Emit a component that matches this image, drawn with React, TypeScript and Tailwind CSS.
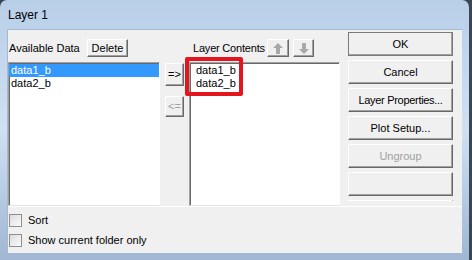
import React from 'react'

const font = { fontFamily: '"Liberation Sans", Arial, sans-serif' }

function Btn({ children, disabled, className = '' }: { children?: React.ReactNode; disabled?: boolean; className?: string }) {
    return (
        <div
            className={`flex items-center justify-center whitespace-nowrap bg-[#f0f0f0] border border-t-white border-l-white border-r-[#696969] border-b-[#696969] shadow-[inset_-1px_-1px_0_#a0a0a0] text-[11px] leading-none ${disabled ? 'text-[#a0a0a0]' : 'text-black'} ${className}`}
        >
            {children}
        </div>
    )
}

function ListBox({ children, className = '' }: { children?: React.ReactNode; className?: string }) {
    return (
        <div className={`bg-white border border-t-[#a0a0a0] border-l-[#a0a0a0] border-r-white border-b-[#e3e3e3] shadow-[inset_1px_1px_0_#696969] pt-px text-[11px] leading-[13px] ${className}`}>
            {children}
        </div>
    )
}

function Check({ label }: { label: string }) {
    return (
        <div className="flex items-center h-[13px] pl-px">
            <div className="w-[13px] h-[13px] border border-[#8f8f8f] bg-gradient-to-br from-[#dcdcdc] to-[#fbfbfb]" />
            <span className="ml-[6px] text-[11px] text-black whitespace-nowrap">{label}</span>
        </div>
    )
}

export default function App() {
    return (
        <div className="w-[472px] h-[260px] bg-[#3b4653] overflow-hidden" style={font}>
            <div className="w-[469px] h-[260px] rounded-t-[7px] bg-gradient-to-b from-[#b8cfe8] via-[#cfe0f2] to-[#9fb7d2] flex flex-col">
                {/* title bar */}
                <div className="h-[29px] pl-[8px] pt-[8px] text-[12px] leading-[14px] text-black">Layer 1</div>

                {/* client area */}
                <div className="relative ml-[7px] w-[455px] h-[224px] bg-[#f0f0f0] border-l border-t border-[#a6b9cf] flex flex-col">
                    <div className="flex h-[176px]">
                        {/* available data */}
                        <div className="w-[152px] flex flex-col">
                            <div className="flex items-center h-[18px] mt-[9px] mb-[5px]">
                                <span className="w-[79px] pl-px text-[11px] whitespace-nowrap">Available Data</span>
                                <Btn className="w-[41px] h-[18px]">Delete</Btn>
                            </div>
                            <ListBox className="flex-1">
                                <div className="bg-[#3399ff] text-white pl-[2px] h-[13px]">data1_b</div>
                                <div className="pl-[2px] h-[13px]">data2_b</div>
                            </ListBox>
                        </div>

                        {/* arrows */}
                        <div className="ml-[5px] w-[19px] flex flex-col">
                            <Btn className="mt-[33px] h-[23px]">=&gt;</Btn>
                            <Btn disabled className="mt-[10px] h-[21px]">&lt;=</Btn>
                        </div>

                        {/* layer contents */}
                        <div className="ml-[5px] w-[151px] flex flex-col">
                            <div className="flex items-center h-[18px] mt-[9px] mb-[5px]">
                                <span className="w-[78px] pl-[4px] text-[11px] whitespace-nowrap tracking-[-0.2px]">Layer Contents</span>
                                <Btn className="w-[22px] h-[18px]">
                                    <svg width="12" height="13" viewBox="0 0 12 13">
                                        <path d="M6 1 L11 6 L8 6 L8 12 L4 12 L4 6 L1 6 Z" fill="#a8a8a8" />
                                    </svg>
                                </Btn>
                                <Btn className="ml-[4px] w-[21px] h-[18px]">
                                    <svg width="12" height="13" viewBox="0 0 12 13">
                                        <path d="M6 12 L11 7 L8 7 L8 1 L4 1 L4 7 L1 7 Z" fill="#a8a8a8" />
                                    </svg>
                                </Btn>
                            </div>
                            <ListBox className="flex-1 pl-[6px]">
                                <div className="h-[13px]">data1_b</div>
                                <div className="h-[13px]">data2_b</div>
                            </ListBox>
                        </div>

                        {/* buttons */}
                        <div className="ml-[8px] w-[105px] h-[171px] overflow-hidden flex flex-col gap-[4px] pt-[2px]">
                            <Btn className="h-[24px] shrink-0 outline outline-1 outline-[#7a7a7a] -outline-offset-1">OK</Btn>
                            <Btn className="h-[24px] shrink-0">Cancel</Btn>
                            <Btn className="h-[24px] shrink-0 tracking-[-0.3px]">Layer Properties...</Btn>
                            <Btn className="h-[24px] shrink-0">Plot Setup...</Btn>
                            <Btn disabled className="h-[24px] shrink-0">Ungroup</Btn>
                            <Btn className="h-[24px] shrink-0" />
                            <Btn className="h-[24px] shrink-0" />
                        </div>
                    </div>

                    {/* bottom panel */}
                    <div className="flex-1 border-t border-white flex flex-col gap-[7px] pt-[7px]">
                        <Check label="Sort" />
                        <Check label="Show current folder only" />
                    </div>

                    {/* highlight */}
                    <div className="absolute left-[177px] top-[27px] w-[58px] h-[39px] border-[4px] border-[#e3161f] rounded-[2px]" />
                </div>
            </div>
        </div>
    )
}
